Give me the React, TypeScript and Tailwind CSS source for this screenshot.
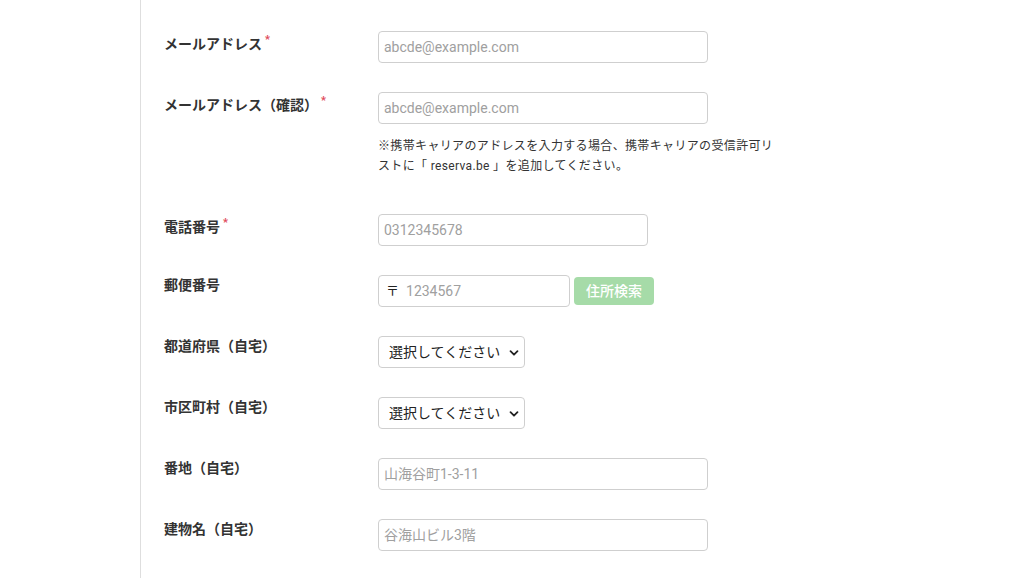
import React from "react";

const font = { fontFamily: "Roboto, 'Noto Sans CJK JP', sans-serif" };

function Label({ text, required, pt }: { text: string; required?: boolean; pt: string }) {
  return (
    <div className={`w-[214px] shrink-0 ${pt} text-[14px] leading-[20px] font-bold text-[#333]`}>
      {text}
      {required && <span className="relative -top-[6px] ml-[3px] text-[11px] text-[#e0475a] font-bold">*</span>}
    </div>
  );
}

function TextInput({ placeholder, w }: { placeholder: string; w: string }) {
  return (
    <div className={`${w} h-[32px] border border-[#cfcfcf] rounded-[4px] bg-white flex items-center px-[5px] text-[14px] text-[#a0a0a0]`}>
      {placeholder}
    </div>
  );
}

function SelectBox() {
  return (
    <div className="w-[147px] h-[32px] border border-[#cfcfcf] rounded-[4px] bg-white flex items-center justify-between pl-[10px] pr-[5px] text-[14px] text-[#222]">
      <span>選択してください</span>
      <svg width="10" height="10" viewBox="0 0 10 10" className="mt-[1px]">
        <path d="M1.5 3.2 L5 6.7 L8.5 3.2" fill="none" stroke="#222" strokeWidth="1.8" strokeLinecap="round" strokeLinejoin="round" />
      </svg>
    </div>
  );
}

export default function App() {
  return (
    <div className="w-[1029px] h-[578px] bg-white overflow-hidden" style={font}>
      <div className="ml-[140px] h-full border-l border-[#dedede] pl-[23px] pt-[31px]">
        <div className="flex mb-[29px]">
          <Label text="メールアドレス" required pt="pt-[3px]" />
          <TextInput placeholder="abcde@example.com" w="w-[330px]" />
        </div>
        <div className="flex mb-[38px]">
          <Label text="メールアドレス（確認）" required pt="pt-[3px]" />
          <div>
            <TextInput placeholder="abcde@example.com" w="w-[330px]" />
            <p className="mt-[12px] w-[398px] text-[12px] tracking-[0.35px] leading-[20px] text-[#333]">
              ※携帯キャリアのアドレスを入力する場合、携帯キャリアの受信許可リストに「 reserva.be 」を追加してください。
            </p>
          </div>
        </div>
        <div className="flex mb-[29px]">
          <Label text="電話番号" required pt="pt-[3px]" />
          <TextInput placeholder="0312345678" w="w-[270px]" />
        </div>
        <div className="flex mb-[29px]">
          <Label text="郵便番号" pt="pt-0" />
          <div className="flex items-center gap-[4px]">
            <div className="w-[192px] h-[32px] border border-[#cfcfcf] rounded-[4px] bg-white flex items-center pl-[7px] text-[14px]">
              <span className="text-[#222] text-[13px]">〒</span>
              <span className="ml-[7px] text-[#a0a0a0]">1234567</span>
            </div>
            <div className="w-[80px] h-[28px] rounded-[4px] bg-[#a6dba8] text-white text-[14px] font-medium flex items-center justify-center">
              住所検索
            </div>
          </div>
        </div>
        <div className="flex mb-[29px]">
          <Label text="都道府県（自宅）" pt="pt-0" />
          <SelectBox />
        </div>
        <div className="flex mb-[29px]">
          <Label text="市区町村（自宅）" pt="pt-0" />
          <SelectBox />
        </div>
        <div className="flex mb-[29px]">
          <Label text="番地（自宅）" pt="pt-0" />
          <TextInput placeholder="山海谷町1-3-11" w="w-[330px]" />
        </div>
        <div className="flex mb-[29px]">
          <Label text="建物名（自宅）" pt="pt-0" />
          <TextInput placeholder="谷海山ビル3階" w="w-[330px]" />
        </div>
      </div>
    </div>
  );
}
